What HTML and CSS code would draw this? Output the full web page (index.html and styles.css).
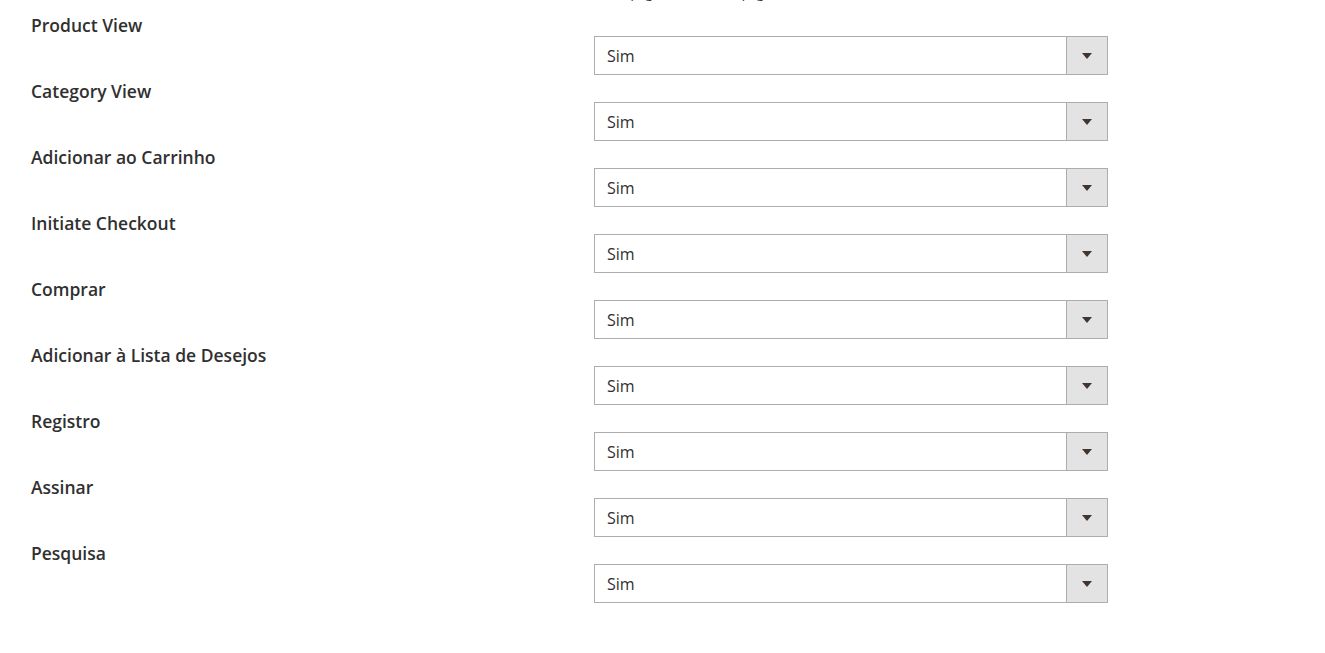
FILE: index.html
```html
<!DOCTYPE html>
<html lang="pt-BR">
<head>
<meta charset="utf-8">
<title>Configuração</title>
<link rel="stylesheet" href="styles.css">
</head>
<body>
<div class="page">
  <p class="note">Ativo na página inicial e na página</p>
  <div class="form">
    <div class="row"><div class="label">Product View</div><div class="control"><div class="select"><span class="value">Sim</span><span class="arrow"></span></div></div></div>
    <div class="row"><div class="label">Category View</div><div class="control"><div class="select"><span class="value">Sim</span><span class="arrow"></span></div></div></div>
    <div class="row"><div class="label">Adicionar ao Carrinho</div><div class="control"><div class="select"><span class="value">Sim</span><span class="arrow"></span></div></div></div>
    <div class="row"><div class="label">Initiate Checkout</div><div class="control"><div class="select"><span class="value">Sim</span><span class="arrow"></span></div></div></div>
    <div class="row"><div class="label">Comprar</div><div class="control"><div class="select"><span class="value">Sim</span><span class="arrow"></span></div></div></div>
    <div class="row"><div class="label">Adicionar à Lista de Desejos</div><div class="control"><div class="select"><span class="value">Sim</span><span class="arrow"></span></div></div></div>
    <div class="row"><div class="label">Registro</div><div class="control"><div class="select"><span class="value">Sim</span><span class="arrow"></span></div></div></div>
    <div class="row"><div class="label">Assinar</div><div class="control"><div class="select"><span class="value">Sim</span><span class="arrow"></span></div></div></div>
    <div class="row"><div class="label">Pesquisa</div><div class="control"><div class="select"><span class="value">Sim</span><span class="arrow"></span></div></div></div>
  </div>
</div>
</body>
</html>
```

FILE: styles.css
```css
html, body {
  margin: 0;
  padding: 0;
  background: #ffffff;
}
body {
  font-family: "Open Sans", "Noto Sans", sans-serif;
  color: #303030;
  overflow: hidden;
  height: 653px;
}
.page {
  padding-left: 31px;
}
.note {
  margin: -16px 0 0 547px;
  height: 18px;
  font-size: 13px;
  line-height: 18px;
  color: #303030;
  white-space: nowrap;
}
.form {
  display: flex;
  flex-direction: column;
  margin-top: 12px;
}
.row {
  display: grid;
  grid-template-columns: 563px 514px;
  height: 66px;
}
.label {
  font-size: 17.5px;
  font-weight: 600;
  line-height: 22px;
  color: #303030;
}
.control {
  padding-top: 22px;
}
.select {
  display: flex;
  height: 39px;
  box-sizing: border-box;
  border: 1px solid #adadad;
  background: #ffffff;
}
.value {
  flex: 1;
  padding-left: 12px;
  font-size: 16px;
  line-height: 39px;
  color: #303030;
}
.arrow {
  width: 40px;
  border-left: 1px solid #adadad;
  background: #e3e3e3;
  display: flex;
  align-items: center;
  justify-content: center;
}
.arrow::before {
  content: "";
  width: 0;
  height: 0;
  border-left: 5px solid transparent;
  border-right: 5px solid transparent;
  border-top: 6px solid #41362f;
}
```
